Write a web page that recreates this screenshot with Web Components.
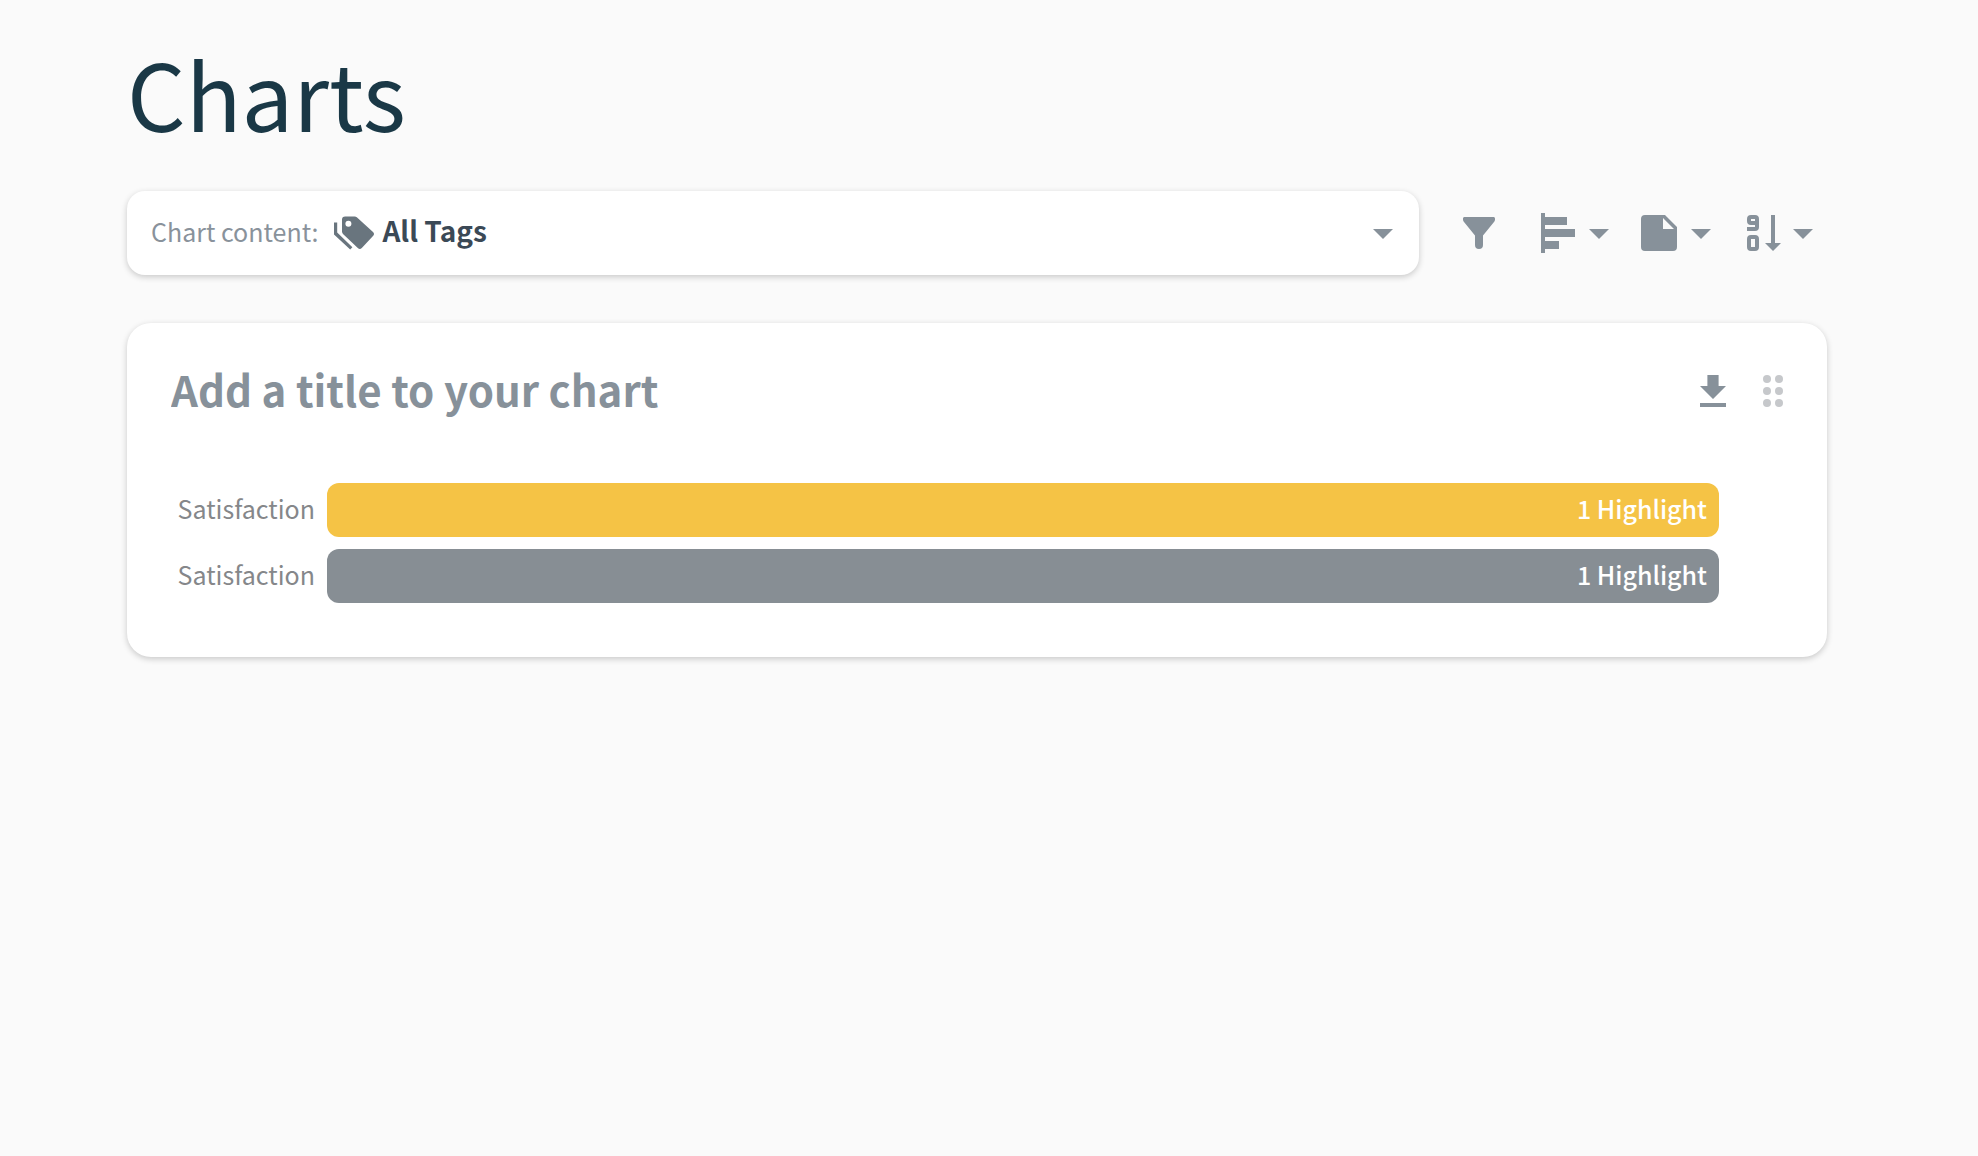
<!DOCTYPE html>
<html lang="en">
<head>
  <meta charset="UTF-8">
  <meta name="viewport" content="width=device-width, initial-scale=1.0">
  <title>Charts</title>
  <style>
    body {
      margin: 0;
      background-color: #fafafa;
      color: #1a3846;
      font-family: "Noto Sans CJK SC", "Noto Sans", sans-serif;
    }
  </style>
</head>
<body>
  <charts-page>
    <chart-toolbar slot="toolbar"></chart-toolbar>
    <chart-card>
      <chart-bar label="Satisfaction" color="#f5c345">1 Highlight</chart-bar>
      <chart-bar label="Satisfaction" color="#878e94">1 Highlight</chart-bar>
    </chart-card>
  </charts-page>

  <template id="charts-page">
    <style>
      :host {
        display: block;
        min-height: 100vh;
        padding: 20px 151px 0 127px;
        box-sizing: border-box;
      }
      h1 {
        margin: 0 0 27px;
        font-size: 92px;
        font-weight: 400;
        line-height: 144px;
      }
      .toolbar {
        margin-bottom: 48px;
      }
    </style>
    <h1>Charts</h1>
    <div class="toolbar"><slot name="toolbar"></slot></div>
    <slot></slot>
  </template>

  <template id="chart-toolbar">
    <style>
      :host {
        display: flex;
        align-items: center;
      }
      .content {
        display: flex;
        flex: 1;
        align-items: center;
        height: 84px;
        padding: 0 12px 0 24px;
        box-sizing: border-box;
        border: 0;
        border-radius: 18px;
        background-color: #fff;
        box-shadow: 0 2px 6px rgba(0, 0, 0, .2);
        color: #3b4956;
        font: inherit;
        text-align: left;
      }
      .label {
        padding-bottom: 4px;
        color: #89929b;
        font-size: 25px;
      }
      .value {
        flex: 1;
        margin-left: 4px;
        padding-bottom: 6px;
        font-size: 28px;
        font-weight: 700;
      }
      .content ui-icon:first-of-type {
        margin-left: 12px;
        color: #69757e;
      }
      .content ui-icon:last-of-type {
        color: #87919a;
      }
      .tools {
        display: flex;
        gap: 12px;
        margin-left: 36px;
      }
      .tools button {
        display: flex;
        padding: 0;
        border: 0;
        background: none;
        color: #87919a;
      }
      .tools button:first-child {
        margin-right: 18px;
      }
      .tools ui-icon + ui-icon {
        margin-left: -6px;
      }
    </style>
    <button class="content" type="button" aria-haspopup="listbox">
      <span class="label">Chart content:</span>
      <ui-icon name="tags"></ui-icon>
      <span class="value">All Tags</span>
      <ui-icon name="caret"></ui-icon>
    </button>
    <div class="tools">
      <button type="button" aria-label="Filter"><ui-icon name="filter"></ui-icon></button>
      <button type="button" aria-label="Chart type"><ui-icon name="chart"></ui-icon><ui-icon name="caret"></ui-icon></button>
      <button type="button" aria-label="Group by"><ui-icon name="note"></ui-icon><ui-icon name="caret"></ui-icon></button>
      <button type="button" aria-label="Sort"><ui-icon name="sort"></ui-icon><ui-icon name="caret"></ui-icon></button>
    </div>
  </template>

  <template id="chart-card">
    <style>
      :host {
        display: block;
        padding: 32px 30px 54px 44px;
        border-radius: 24px;
        background-color: #fff;
        box-shadow: 0 2px 6px rgba(0, 0, 0, .2);
      }
      header {
        display: flex;
        align-items: center;
        height: 72px;
        margin-bottom: 56px;
      }
      input {
        flex: 1;
        min-width: 0;
        padding: 0 0 6px;
        border: 0;
        outline: 0;
        background: none;
        color: #3b4956;
        font: inherit;
        font-size: 42px;
        font-weight: 700;
      }
      input::placeholder {
        color: #87919a;
        opacity: 1;
      }
      button {
        display: flex;
        padding: 0;
        border: 0;
        background: none;
        color: #87919a;
      }
      .drag {
        margin-left: 12px;
        color: #c6c8cb;
      }
      .bars {
        display: flex;
        flex-direction: column;
        gap: 12px;
        padding-right: 78px;
      }
    </style>
    <header>
      <input type="text" aria-label="Chart title" placeholder="Add a title to your chart">
      <button type="button" aria-label="Download"><ui-icon name="download"></ui-icon></button>
      <button class="drag" type="button" aria-label="Move chart"><ui-icon name="drag"></ui-icon></button>
    </header>
    <div class="bars"><slot></slot></div>
  </template>

  <template id="chart-bar">
    <style>
      :host {
        display: flex;
        gap: 12px;
        font-size: 25px;
        line-height: 50px;
      }
      .label {
        width: 144px;
        color: #85878a;
        text-align: right;
      }
      .bar {
        flex: 1;
        padding: 0 12px 4px 0;
        border-radius: 12px;
        background-color: var(--bar-color);
        color: #fff;
        font-weight: 500;
        text-align: right;
      }
    </style>
    <span class="label"></span>
    <div class="bar"><slot></slot></div>
  </template>

  <script>
    const icons = {
      caret: '<path d="M7 10l5 5 5-5z"/>',
      filter: '<path d="M4.600 4h14.800a.7.7 0 0 1 .6.7v.6a1.500 1.500 0 0 1-.3.900L14 13.200V18a2 2 0 0 1-4 0v-4.800L4.300 6.200a1.500 1.500 0 0 1-.3-.9v-.6a.7.7 0 0 1 .6-.7z"/>',
      chart: '<path d="M4 2h2v2h11v4H6v2h15v4H6v2h7v4H6v2H4z"/>',
      note: '<path d="M14 10V4.500L19.500 10M5 3a2 2 0 0 0-2 2v14a2 2 0 0 0 2 2h14a2 2 0 0 0 2-2V9l-6-6z"/>',
      sort: '<path d="M17 3h2v14h3l-4 4-4-4h3z"/><path fill-rule="evenodd" d="M7 3h2a2 2 0 0 1 2 2v4a2 2 0 0 1-2 2H5V9h4V8H7a2 2 0 0 1-2-2V5a2 2 0 0 1 2-2zm0 2v1h2V5zM7 13h2a2 2 0 0 1 2 2v4a2 2 0 0 1-2 2H7a2 2 0 0 1-2-2v-4a2 2 0 0 1 2-2zm0 2v4h2v-4z"/>',
      download: '<path d="M5.500 18h13v2h-13zM9.200 4h5.600v5.500h3.700L12 16 5.500 9.500h3.700z"/>',
      drag: '<circle cx="9" cy="6" r="2"/><circle cx="15" cy="6" r="2"/><circle cx="9" cy="12" r="2"/><circle cx="15" cy="12" r="2"/><circle cx="9" cy="18" r="2"/><circle cx="15" cy="18" r="2"/>',
      tags: '<path fill-rule="evenodd" d="M7.600 3.700h4.700a1.600 1.600 0 0 1 1.100.4l8.100 7.400a1.400 1.400 0 0 1 0 2l-5.600 6a1.500 1.500 0 0 1-2 0l-7.400-7a1.700 1.700 0 0 1-.5-1.200v-6a1.600 1.600 0 0 1 1.600-1.600zM9.200 5.900a1.500 1.500 0 1 0 0 3 1.500 1.500 0 0 0 0-3z"/><path d="M2 6.700h1.600v5l7.600 7.400-1.100 1.200L2 12.700z"/>'
    };

    class UiIcon extends HTMLElement {
      constructor() { super();
        this.attachShadow({ mode: 'open' });
        this.shadowRoot.innerHTML = `
          <style>
            :host { display: block; flex: none; width: 48px; height: 48px; }
            svg { display: block; width: 100%; height: 100%; fill: currentColor; }
          </style>
          <svg viewBox="0 0 24 24" aria-hidden="true">${icons[this.getAttribute('name')] || ''}</svg>`;
      }
    }

    class TemplateElement extends HTMLElement {
      constructor() { super();
        const template = document.querySelector('#' + this.localName);
        this.attachShadow({ mode: 'open' });
        this.shadowRoot.append(template.content.cloneNode(true));
      }
    }

    class ChartBar extends TemplateElement {
      connectedCallback() {
        this.shadowRoot.querySelector('.label').textContent = this.getAttribute('label');
        this.style.setProperty('--bar-color', this.getAttribute('color'));
      }
    }

    customElements.define('ui-icon', UiIcon);
    customElements.define('charts-page', class extends TemplateElement {});
    customElements.define('chart-toolbar', class extends TemplateElement {});
    customElements.define('chart-card', class extends TemplateElement {});
    customElements.define('chart-bar', ChartBar);
  </script>
</body>
</html>
